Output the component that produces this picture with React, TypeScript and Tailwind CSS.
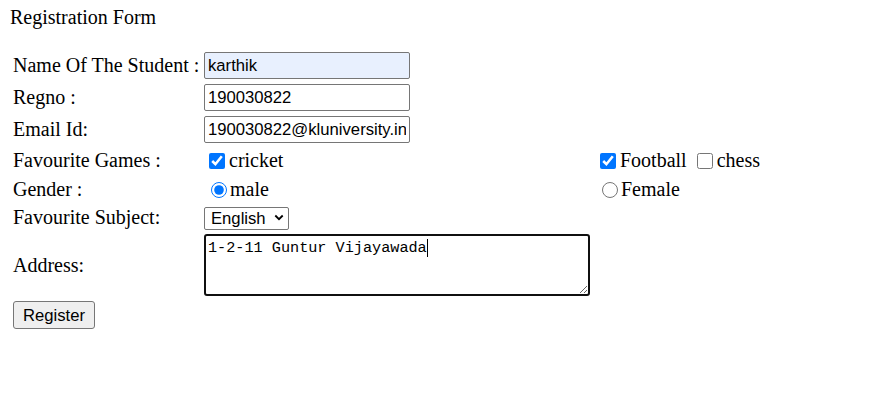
const fieldBox =
  "h-[27px] w-[206px] rounded-[2px] border border-[#767676] px-[3px] font-['Liberation_Sans',Arial,sans-serif] text-[16.67px] text-black outline-none"

function Label({ children }: { children: React.ReactNode }) {
  return <div className="flex items-center whitespace-nowrap">{children}</div>
}

export default function App() {
  return (
    <div className="min-h-[411px] w-[888px] bg-white font-['Liberation_Serif','Times_New_Roman',serif] text-[20px] leading-[23px] text-black">
      <div className="pl-[10px] pt-[6px]">Registration Form</div>

      <form
        className="grid grid-cols-[186px_386px_auto] gap-x-[5px] gap-y-[5px] pl-[13px] pt-[23px]"
        onSubmit={(e) => e.preventDefault()}
      >
        {/* name */}
        <Label>Name Of The Student :</Label>
        <div className="flex items-center">
          <input className={fieldBox + ' bg-[#e8f0fe]'} defaultValue="karthik" />
        </div>
        <div />

        {/* regno */}
        <Label>Regno :</Label>
        <div className="flex items-center">
          <input className={fieldBox + ' bg-white'} defaultValue="190030822" />
        </div>
        <div />

        {/* email */}
        <Label>Email Id:</Label>
        <div className="flex items-center">
          <input className={fieldBox + ' bg-white'} defaultValue="190030822@kluniversity.in" />
        </div>
        <div />

        {/* games */}
        <Label>Favourite Games :</Label>
        <div className="flex h-[25px] items-center">
          <input type="checkbox" defaultChecked className="ml-[5px] mr-[4px] h-4 w-4 accent-[#0075ff]" />
          <span>cricket</span>
        </div>
        <div className="flex h-[25px] items-center">
          <input type="checkbox" defaultChecked className="ml-[5px] mr-[4px] h-4 w-4 accent-[#0075ff]" />
          <span>Football</span>
          <input type="checkbox" className="ml-[10px] mr-[4px] h-4 w-4" />
          <span>chess</span>
        </div>

        {/* gender */}
        <Label>Gender :</Label>
        <div className="flex h-[23px] items-center">
          <input type="radio" name="gender" defaultChecked className="ml-[7px] mr-[3px] h-4 w-4 accent-[#0075ff]" />
          <span>male</span>
        </div>
        <div className="flex h-[23px] items-center">
          <input type="radio" name="gender" className="ml-[7px] mr-[3px] h-4 w-4" />
          <span>Female</span>
        </div>

        {/* subject */}
        <Label>Favourite Subject:</Label>
        <div className="flex items-center">
          <div className="relative h-[23px] w-[85px]">
            <select
              defaultValue="English"
              className="h-full w-full appearance-none rounded-[2px] border border-[#767676] bg-white pl-[6px] font-['Liberation_Sans',Arial,sans-serif] text-[16.67px] leading-[21px] text-black outline-none"
            >
              <option>English</option>
              <option>Maths</option>
              <option>Science</option>
            </select>
            <svg
              className="pointer-events-none absolute right-[5px] top-[8px] h-[7px] w-[10px]"
              viewBox="0 0 10 7"
              fill="none"
            >
              <path d="M1.3 1.5 5 5.2 8.7 1.5" stroke="#000" strokeWidth="1.8" />
            </svg>
          </div>
        </div>
        <div />

        {/* address */}
        <Label>Address:</Label>
        <div className="relative h-[62px] w-[386px]">
          <textarea
            defaultValue="1-2-11 Guntur Vijayawada"
            className="h-full w-full rounded-[3px] border-2 border-[#101010] bg-white px-[2px] pt-[4px] font-['Liberation_Mono','Courier_New',monospace] text-[15.2px] leading-[17px] text-black outline-none"
          />
          <span className="pointer-events-none absolute left-[223px] top-[5px] h-[18px] w-px bg-black" />
        </div>
        <div />

        {/* submit */}
        <div className="flex items-center">
          <button
            type="submit"
            className="h-[28px] w-[82px] rounded-[3px] border border-[#767676] bg-[#efefef] font-['Liberation_Sans',Arial,sans-serif] text-[16.67px] text-black"
          >
            Register
          </button>
        </div>
      </form>
    </div>
  )
}
